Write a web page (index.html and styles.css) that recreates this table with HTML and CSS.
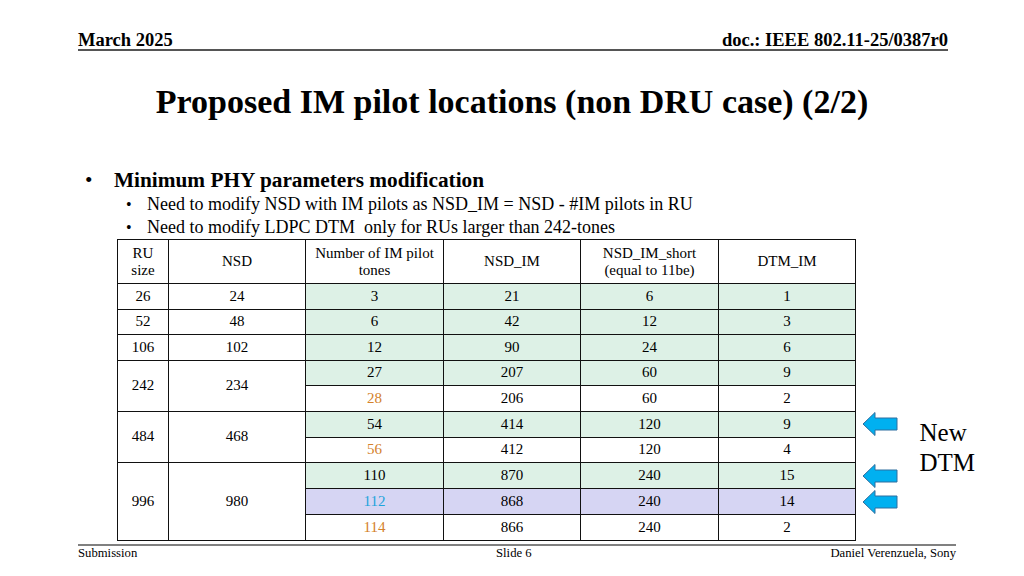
FILE: index.html
```html
<!DOCTYPE html>
<html>
<head>
<meta charset="utf-8">
<link rel="stylesheet" href="styles.css">
</head>
<body>
<div class="slide">
  <header class="top">
    <span>March 2025</span>
    <span>doc.: IEEE 802.11-25/0387r0</span>
  </header>
  <h1 class="title">Proposed IM pilot locations (non DRU case) (2/2)</h1>
  <ul class="bullets">
    <li class="lvl1">Minimum PHY parameters modification
      <ul class="sub">
        <li>Need to modify NSD with IM pilots as NSD_IM = NSD - #IM pilots in RU</li>
        <li>Need to modify LDPC DTM&nbsp; only for RUs larger than 242-tones</li>
      </ul>
    </li>
  </ul>
  <table class="params">
    <colgroup>
      <col class="c1"><col class="c2"><col class="c3"><col class="c4"><col class="c5"><col class="c6"><col class="c7"><col class="c8">
    </colgroup>
    <tr class="head">
      <td class="cell">RU<br>size</td>
      <td class="cell">NSD</td>
      <td class="cell small">Number of IM pilot<br>tones</td>
      <td class="cell">NSD_IM</td>
      <td class="cell small">NSD_IM_short<br>(equal to 11be)</td>
      <td class="cell">DTM_IM</td>
      <td class="side"></td><td class="side"></td>
    </tr>
    <tr class="row">
      <td class="cell">26</td><td class="cell">24</td>
      <td class="cell g">3</td><td class="cell g">21</td><td class="cell g">6</td><td class="cell g">1</td>
      <td class="side"></td><td class="side"></td>
    </tr>
    <tr class="row">
      <td class="cell">52</td><td class="cell">48</td>
      <td class="cell g">6</td><td class="cell g">42</td><td class="cell g">12</td><td class="cell g">3</td>
      <td class="side"></td><td class="side"></td>
    </tr>
    <tr class="row">
      <td class="cell">106</td><td class="cell">102</td>
      <td class="cell g">12</td><td class="cell g">90</td><td class="cell g">24</td><td class="cell g">6</td>
      <td class="side"></td><td class="side"></td>
    </tr>
    <tr class="row">
      <td class="cell" rowspan="2">242</td><td class="cell" rowspan="2">234</td>
      <td class="cell g">27</td><td class="cell g">207</td><td class="cell g">60</td><td class="cell g">9</td>
      <td class="side"></td><td class="side"></td>
    </tr>
    <tr class="row">
      <td class="cell orange">28</td><td class="cell">206</td><td class="cell">60</td><td class="cell">2</td>
      <td class="side"></td><td class="side"></td>
    </tr>
    <tr class="row">
      <td class="cell" rowspan="2">484</td><td class="cell" rowspan="2">468</td>
      <td class="cell g">54</td><td class="cell g">414</td><td class="cell g">120</td><td class="cell g">9</td>
      <td class="side arrow-cell"><svg class="arrow" viewBox="0 0 36 26"><polygon points="1,13 13,1.5 13,7 35,7 35,19 13,19 13,24.5"/></svg></td>
      <td class="side note" rowspan="3">New<br>DTM</td>
    </tr>
    <tr class="row">
      <td class="cell orange">56</td><td class="cell">412</td><td class="cell">120</td><td class="cell">4</td>
      <td class="side"></td>
    </tr>
    <tr class="row">
      <td class="cell" rowspan="3">996</td><td class="cell" rowspan="3">980</td>
      <td class="cell g">110</td><td class="cell g">870</td><td class="cell g">240</td><td class="cell g">15</td>
      <td class="side arrow-cell"><svg class="arrow" viewBox="0 0 36 26"><polygon points="1,13 13,1.5 13,7 35,7 35,19 13,19 13,24.5"/></svg></td>
    </tr>
    <tr class="row">
      <td class="cell p blue">112</td><td class="cell p">868</td><td class="cell p">240</td><td class="cell p">14</td>
      <td class="side arrow-cell"><svg class="arrow" viewBox="0 0 36 26"><polygon points="1,13 13,1.5 13,7 35,7 35,19 13,19 13,24.5"/></svg></td>
      <td class="side"></td>
    </tr>
    <tr class="row">
      <td class="cell orange">114</td><td class="cell">866</td><td class="cell">240</td><td class="cell">2</td>
      <td class="side"></td><td class="side"></td>
    </tr>
  </table>
  <footer class="bottom">
    <span class="f-left">Submission</span>
    <span class="f-mid">Slide 6</span>
    <span class="f-right">Daniel Verenzuela, Sony</span>
  </footer>
</div>
</body>
</html>
```

FILE: styles.css
```css
html, body {
  margin: 0;
  padding: 0;
  background: #ffffff;
}

.slide {
  width: 1024px;
  height: 576px;
  position: relative;
  overflow: hidden;
  font-family: "Liberation Serif", "Times New Roman", serif;
  color: #000;
  display: flex;
  flex-direction: column;
}

.top {
  margin: 0 76px 0 78px;
  padding-top: 30px;
  height: 19px;
  display: flex;
  justify-content: space-between;
  align-items: flex-start;
  font-weight: bold;
  font-size: 18.5px;
  line-height: 20px;
  border-bottom: 2px solid #555;
}

.title {
  margin: 31px 0 0 0;
  text-align: center;
  font-size: 34px;
  line-height: 40px;
  font-weight: bold;
}

.bullets {
  margin: 46px 0 0 0;
  padding: 0;
  list-style: none;
}

.lvl1 {
  position: relative;
  padding-left: 114px;
  font-size: 21.3px;
  line-height: 24px;
  font-weight: bold;
}

.lvl1::before {
  content: "•";
  position: absolute;
  left: 85px;
  font-weight: normal;
}

.sub {
  margin: 1px 0 0 0;
  padding: 0;
  list-style: none;
  font-weight: normal;
}

.sub li {
  position: relative;
  margin-left: -114px;
  padding-left: 147px;
  font-size: 18px;
  line-height: 23px;
}

.sub li::before {
  content: "•";
  position: absolute;
  left: 126px;
  font-size: 16px;
}

.params {
  margin: 0 0 0 117px;
  border-collapse: collapse;
  table-layout: fixed;
  width: 868px;
  font-size: 15px;
}

.c1 { width: 51px; }
.c2 { width: 137px; }
.c3 { width: 138px; }
.c4 { width: 137px; }
.c5 { width: 138px; }
.c6 { width: 137px; }
.c7 { width: 50px; }
.c8 { width: 80px; }

.head { height: 44px; }
.row { height: 25.5px; }

.cell {
  border: 1px solid #111;
  text-align: center;
  vertical-align: middle;
  padding: 0;
  line-height: 17px;
}

.small { font-size: 15px; }

.g { background: #ddf1e6; }
.p { background: #d6d5f3; }
.orange { color: #d4822b; }
.blue { color: #1ea4dc; }

.side {
  border: none;
  padding: 0;
}

.arrow-cell {
  text-align: left;
  vertical-align: middle;
  line-height: 0;
}

.arrow {
  width: 36px;
  height: 26px;
  margin-left: 6px;
}

.arrow polygon {
  fill: #00b0f0;
  stroke: #2f6f9f;
  stroke-width: 1;
}

.note {
  vertical-align: middle;
  font-size: 25px;
  line-height: 30px;
  padding-left: 14px;
  padding-bottom: 3px;
}

.bottom {
  margin: 3px 68px 0 78px;
  border-top: 2px solid #808080;
  display: flex;
  justify-content: space-between;
  font-size: 12.7px;
  line-height: 14px;
  padding-top: 0;
}

.f-mid { margin-left: 60px; }
```
